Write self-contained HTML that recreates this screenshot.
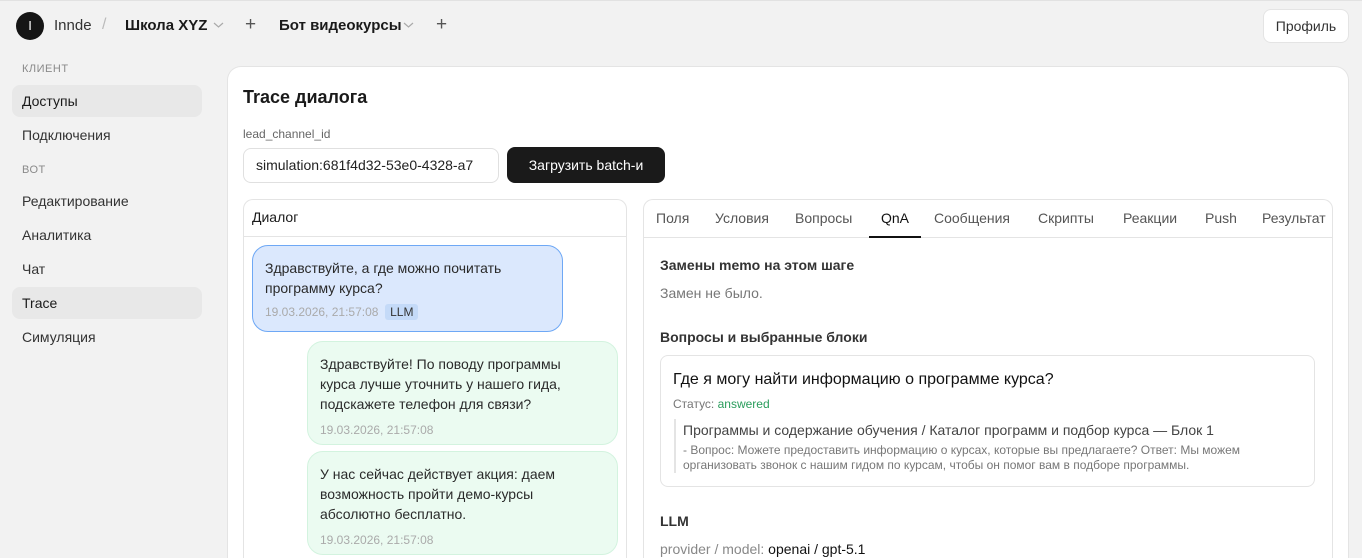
<!DOCTYPE html>
<html style="width:1362px;height:558px;overflow:hidden"><head><meta charset="utf-8"><style>
*{box-sizing:border-box;margin:0;padding:0}
body{width:1362px;height:558px;overflow:hidden;background:#f2f2f2;font-family:"Liberation Sans","DejaVu Sans",sans-serif;color:#1a1a1a;position:relative;border-top:1px solid #e2e2e2}
.a{position:absolute;white-space:nowrap}
.nav{font-size:14px;color:#333}
.sec{font-size:11px;color:#8a8a8a;letter-spacing:.5px}
.tab{font-size:14px;color:#555;top:209px}
.bub{position:absolute;border-radius:16px;padding:12px 40px 12px 12px;font-size:14px;line-height:20px;color:#2a2a2a;white-space:normal}
.ts{font-size:12px;color:#aaa;margin-top:6px}
</style></head><body>
<div class="a" style="left:16px;top:11px;width:28px;height:28px;border-radius:50%;background:#151515;color:#fff;font-size:13px;text-align:center;line-height:28px">I</div>
<div class="a" style="left:54px;top:16px;font-size:15px;color:#333">Innde</div>
<div class="a" style="left:102px;top:15px;font-size:16px;color:#bbb">/</div>
<div class="a" style="left:125px;top:16px;font-size:15px;font-weight:bold">Школа XYZ</div>
<svg class="a" style="left:213px;top:20px" width="11" height="8"><path d="M1 2l4.5 4 4.5-4" fill="none" stroke="#aaa" stroke-width="1.2"/></svg>
<div class="a" style="left:245px;top:13px;font-size:19px;color:#555">+</div>
<div class="a" style="left:279px;top:16px;font-size:15px;font-weight:bold">Бот видеокурсы</div>
<svg class="a" style="left:403px;top:20px" width="11" height="8"><path d="M1 2l4.5 4 4.5-4" fill="none" stroke="#aaa" stroke-width="1.2"/></svg>
<div class="a" style="left:436px;top:13px;font-size:19px;color:#555">+</div>
<div class="a" style="left:1263px;top:8px;width:86px;height:34px;background:#fff;border:1px solid #e4e4e4;border-radius:8px;font-size:14px;text-align:center;line-height:32px;color:#333">Профиль</div>

<div class="a sec" style="left:22px;top:62px">КЛИЕНТ</div>
<div class="a" style="left:12px;top:84px;width:190px;height:32px;background:#e8e8e8;border-radius:8px"></div>
<div class="a nav" style="left:22px;top:92px;color:#1a1a1a">Доступы</div>
<div class="a nav" style="left:22px;top:126px">Подключения</div>
<div class="a sec" style="left:22px;top:163px">ВОТ</div>
<div class="a nav" style="left:22px;top:192px">Редактирование</div>
<div class="a nav" style="left:22px;top:226px">Аналитика</div>
<div class="a nav" style="left:22px;top:260px">Чат</div>
<div class="a" style="left:12px;top:286px;width:190px;height:32px;background:#e8e8e8;border-radius:8px"></div>
<div class="a nav" style="left:22px;top:294px;color:#1a1a1a">Trace</div>
<div class="a nav" style="left:22px;top:328px">Симуляция</div>

<div class="a" style="left:227px;top:65px;width:1122px;height:493px;background:#fff;border:1px solid #e4e4e4;border-bottom:none;border-radius:14px 14px 0 0"></div>
<div class="a" style="left:243px;top:86px;font-size:18px;font-weight:bold">Trace диалога</div>
<div class="a" style="left:243px;top:126px;font-size:12px;color:#666">lead_channel_id</div>
<div class="a" style="left:243px;top:147px;width:256px;height:35px;border:1px solid #e0e0e0;border-radius:8px;font-size:14px;line-height:33px;padding-left:12px;overflow:hidden;color:#222">simulation:681f4d32-53e0-4328-a7</div>
<div class="a" style="left:507px;top:146px;width:158px;height:36px;background:#1a1a1a;border-radius:8px;color:#fff;font-size:14px;text-align:center;line-height:36px">Загрузить batch-и</div>

<div class="a" style="left:243px;top:198px;width:384px;height:360px;border:1px solid #e4e4e4;border-bottom:none;border-radius:10px 10px 0 0"></div>
<div class="a" style="left:243px;top:235px;width:384px;height:1px;background:#e4e4e4"></div>
<div class="a" style="left:252px;top:208px;font-size:14px">Диалог</div>
<div class="bub" style="left:252px;top:244px;width:311px;height:87px;background:#dbe8fd;border:1px solid #6ea8f5">Здравствуйте, а где можно почитать программу курса?<div class="ts" style="margin-top:4px">19.03.2026, 21:57:08 &nbsp;<span style="background:#c4daf8;color:#333;padding:1px 5px;border-radius:3px">LLM</span></div></div>
<div class="bub" style="left:307px;top:340px;width:311px;height:104px;background:#ebfbf1;border:1px solid #d3f3df">Здравствуйте! По поводу программы курса лучше уточнить у нашего гида, подскажете телефон для связи?<div class="ts">19.03.2026, 21:57:08</div></div>
<div class="bub" style="left:307px;top:450px;width:311px;height:104px;background:#ebfbf1;border:1px solid #d3f3df">У нас сейчас действует акция: даем возможность пройти демо-курсы абсолютно бесплатно.<div class="ts">19.03.2026, 21:57:08</div></div>

<div class="a" style="left:643px;top:198px;width:690px;height:360px;border:1px solid #e4e4e4;border-bottom:none;border-radius:10px 10px 0 0"></div>
<div class="a" style="left:643px;top:236px;width:690px;height:1px;background:#e4e4e4"></div>
<div class="a tab" style="left:656px">Поля</div>
<div class="a tab" style="left:715px">Условия</div>
<div class="a tab" style="left:795px">Вопросы</div>
<div class="a tab" style="left:881px;color:#111">QnA</div>
<div class="a" style="left:869px;top:235px;width:52px;height:2px;background:#111"></div>
<div class="a tab" style="left:934px">Сообщения</div>
<div class="a tab" style="left:1038px">Скрипты</div>
<div class="a tab" style="left:1123px">Реакции</div>
<div class="a tab" style="left:1205px">Push</div>
<div class="a tab" style="left:1262px;width:70px;overflow:hidden">Результат</div>

<div class="a" style="left:660px;top:256px;font-size:14px;font-weight:bold;color:#333">Замены memo на этом шаге</div>
<div class="a" style="left:660px;top:284px;font-size:14px;color:#777">Замен не было.</div>
<div class="a" style="left:660px;top:328px;font-size:14px;font-weight:bold;color:#333">Вопросы и выбранные блоки</div>
<div class="a" style="left:660px;top:354px;width:655px;height:132px;border:1px solid #e4e4e4;border-radius:8px"></div>
<div class="a" style="left:673px;top:370px;font-size:16px;color:#111">Где я могу найти информацию о программе курса?</div>
<div class="a" style="left:673px;top:396px;font-size:12px;color:#777">Статус: <span style="color:#2a9d5c">answered</span></div>
<div class="a" style="left:674px;top:418px;width:2px;height:54px;background:#e4e4e4"></div>
<div class="a" style="left:683px;top:421px;font-size:14px;color:#444">Программы и содержание обучения / Каталог программ и подбор курса — Блок 1</div>
<div class="a" style="left:683px;top:442px;font-size:12px;color:#777;line-height:15px">- Вопрос: Можете предоставить информацию о курсах, которые вы предлагаете? Ответ: Мы можем<br>организовать звонок с нашим гидом по курсам, чтобы он помог вам в подборе программы.</div>
<div class="a" style="left:660px;top:512px;font-size:14px;font-weight:bold;color:#333">LLM</div>
<div class="a" style="left:660px;top:540px;font-size:14px;color:#888;line-height:17px">provider / model: <span style="color:#111">openai / gpt-5.1</span></div>
</body></html>
